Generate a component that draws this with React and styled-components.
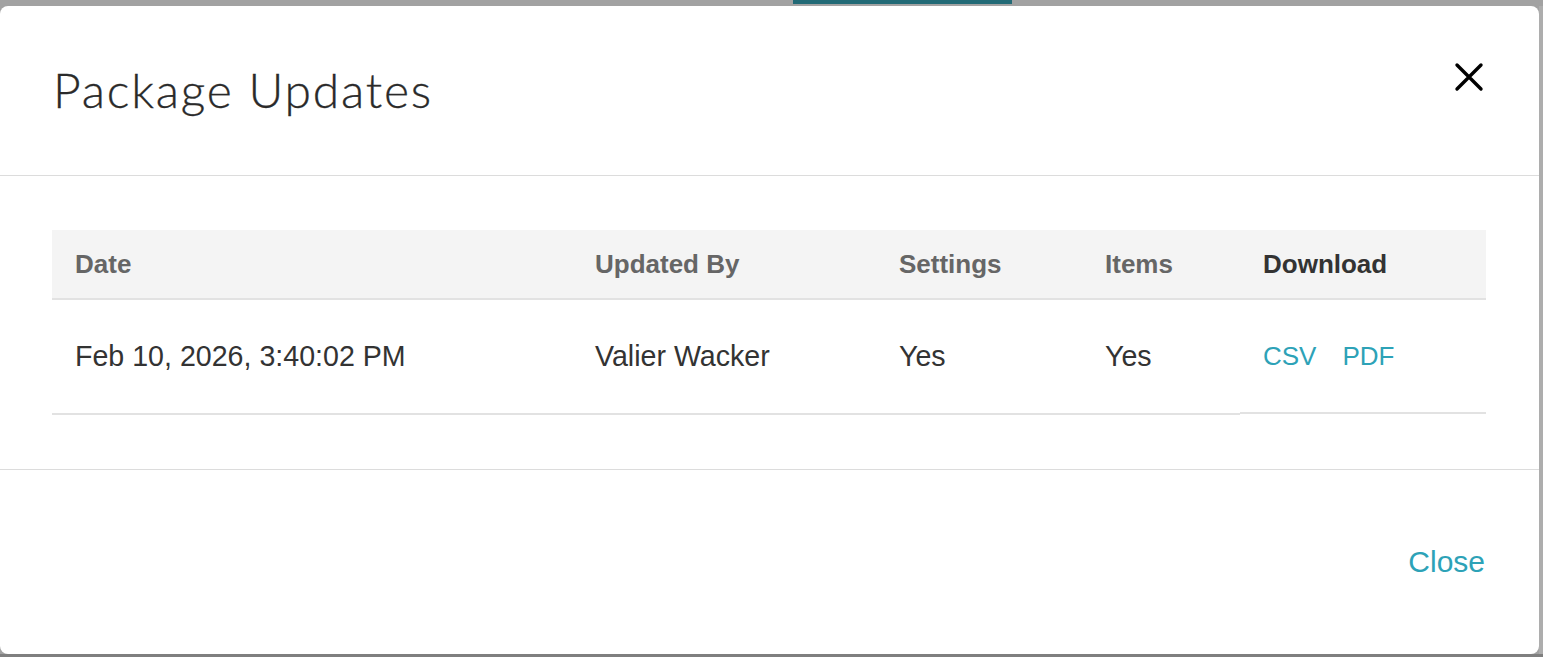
import React from "react";
import styled, { createGlobalStyle } from "styled-components";

const Global = createGlobalStyle`
  html, body { margin: 0; padding: 0; }
  body {
    width: 1543px;
    height: 657px;
    overflow: hidden;
    background: #a2a2a2;
    font-family: "Liberation Sans", Arial, sans-serif;
  }
`;

const Page = styled.div`
  position: relative;
  width: 1543px;
  height: 657px;
  background: #a2a2a2;
  overflow: hidden;
`;

const Backdrop = styled.div`
  position: absolute;
  inset: 0;
  display: flex;
  flex-direction: column;
`;

const TopBar = styled.div`
  height: 6px;
  display: flex;
  padding-left: 793px;
`;

const ActiveTab = styled.div`
  width: 219px;
  height: 4px;
  background: #226a76;
`;

const RightEdge = styled.div`
  flex: 1;
  align-self: flex-end;
  width: 4px;
  background: #adadad;
`;

const BottomStrip = styled.div`
  height: 3px;
  background: #7f7f7f;
`;

const Modal = styled.div`
  position: absolute;
  top: 6px;
  left: 0;
  width: 1539px;
  height: 648px;
  background: #fff;
  border-radius: 8px;
  display: flex;
  flex-direction: column;
  box-sizing: border-box;
`;

const Header = styled.div`
  height: 170px;
  box-sizing: border-box;
  border-bottom: 1px solid #dcdcdc;
  display: flex;
  align-items: center;
  justify-content: space-between;
  padding: 0 55px 3px 53px;
`;

const Title = styled.h2`
  margin: 0;
  font-family: Lato, "Open Sans", sans-serif;
  font-weight: 300;
  font-size: 48px;
  color: #2a2a2a;
  letter-spacing: 1.8px;
  -webkit-text-stroke: 0.3px #2a2a2a;
`;

const CloseIcon = styled.button`
  align-self: flex-start;
  border: 0;
  background: none;
  padding: 0;
  width: 30px;
  height: 30px;
  display: flex;
  cursor: pointer;
  margin-top: 56px;
`;

const Body = styled.div`
  box-sizing: border-box;
  height: 294px;
  padding: 54px 53px 0 52px;
  border-bottom: 1px solid #dcdcdc;
`;

const Table = styled.div`
  display: grid;
  grid-template-columns: 520px 304px 206px 158px 1fr;
`;

const HeadCell = styled.div`
  height: 68px;
  background: #f4f4f4;
  border-bottom: 2px solid #e2e2e2;
  display: flex;
  align-items: center;
  padding-left: 23px;
  font-weight: 700;
  font-size: 26px;
  color: ${(p) => (p.$active ? "#333" : "#666")};
`;

const Cell = styled.div`
  height: 113px;
  border-bottom: 2px solid #e2e2e2;
  display: flex;
  align-items: center;
  padding-left: 23px;
  font-size: 28.6px;
  color: #333;
  gap: 26px;
  box-sizing: content-box;
`;

const LinkCell = styled(Cell)`
  height: 112px;
  margin-bottom: 1px;
`;

const DLink = styled.a`
  font-size: 26px;
  color: #2da2b7;
  text-decoration: none;
  cursor: pointer;
  padding-top: 1px;
`;

const Footer = styled.div`
  flex: 1;
  display: flex;
  align-items: center;
  justify-content: flex-end;
  padding: 0 54px 0 0;
`;

const CloseLink = styled.a`
  font-size: 30px;
  color: #2da2b7;
  cursor: pointer;
`;

const XIcon = () => (
  <svg width="30" height="30" viewBox="0 0 30 30">
    <path
      d="M3 3 L27 27 M27 3 L3 27"
      stroke="#000"
      strokeWidth="3.4"
      strokeLinecap="round"
      fill="none"
    />
  </svg>
);

export default function App() {
  return (
    <Page>
      <Global />
      <Backdrop>
        <TopBar>
          <ActiveTab />
        </TopBar>
        <RightEdge />
        <BottomStrip />
      </Backdrop>
      <Modal>
        <Header>
          <Title>Package Updates</Title>
          <CloseIcon aria-label="Close">
            <XIcon />
          </CloseIcon>
        </Header>
        <Body>
          <Table>
            <HeadCell>Date</HeadCell>
            <HeadCell>Updated By</HeadCell>
            <HeadCell>Settings</HeadCell>
            <HeadCell>Items</HeadCell>
            <HeadCell $active>Download</HeadCell>
            <Cell>Feb 10, 2026, 3:40:02 PM</Cell>
            <Cell>Valier Wacker</Cell>
            <Cell>Yes</Cell>
            <Cell>Yes</Cell>
            <LinkCell>
              <DLink>CSV</DLink>
              <DLink>PDF</DLink>
            </LinkCell>
          </Table>
        </Body>
        <Footer>
          <CloseLink>Close</CloseLink>
        </Footer>
      </Modal>
    </Page>
  );
}
